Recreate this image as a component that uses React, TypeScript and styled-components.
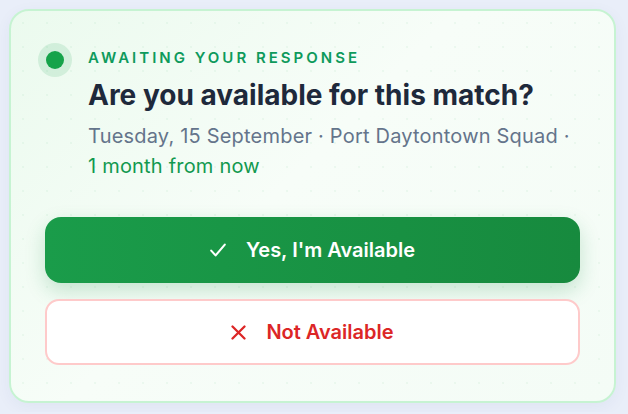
import styled, { createGlobalStyle } from "styled-components";

const GlobalStyle = createGlobalStyle`
  html, body {
    margin: 0;
    padding: 0;
    background: #e9eef9;
  }
  body {
    font-family: Inter, "Noto Sans", sans-serif;
    -webkit-font-smoothing: antialiased;
  }
`;

const Page = styled.div`
  padding: 9px 12px 9px 9px;
`;

const Card = styled.section`
  box-sizing: border-box;
  width: 607px;
  height: 394px;
  border: 2px solid #c6f3d2;
  border-radius: 20px;
  padding: 37px 34px 34px;
  background:
    radial-gradient(circle, rgba(22, 163, 74, 0.05) 1px, transparent 1.5px) 0 0 / 24px 24px,
    linear-gradient(135deg, #ebfaee 0%, #f7fdf8 45%, #f4fcf6 100%);
  box-shadow: 0 4px 16px rgba(30, 60, 120, 0.05);
  display: flex;
  flex-direction: column;
`;

const Header = styled.div`
  display: flex;
  align-items: flex-start;
  gap: 24px;
`;

const Dot = styled.span`
  flex-shrink: 0;
  width: 18px;
  height: 18px;
  margin: 3px 0 0 1px;
  border-radius: 50%;
  background: #16a34a;
  box-shadow: 0 0 0 8px rgba(22, 163, 74, 0.13);
`;

const Texts = styled.div`
  display: flex;
  flex-direction: column;
`;

const Label = styled.div`
  font-size: 15px;
  line-height: 20px;
  font-weight: 600;
  letter-spacing: 3px;
  text-transform: uppercase;
  color: #0e9a5c;
`;

const Title = styled.h1`
  margin: 10px 0 0;
  font-size: 28px;
  line-height: 34px;
  font-weight: 700;
  color: #1e293b;
`;

const Meta = styled.p`
  margin: 9px 0 0;
  font-size: 20px;
  line-height: 30px;
  letter-spacing: 0.2px;
  color: #64748b;
`;

const When = styled.span`
  display: block;
  color: #12994f;
`;

const Actions = styled.div`
  margin-top: 36px;
  display: flex;
  flex-direction: column;
  gap: 16px;
`;

const Button = styled.button<{ $variant: "yes" | "no" }>`
  box-sizing: border-box;
  height: 66px;
  width: 100%;
  display: flex;
  align-items: center;
  justify-content: center;
  gap: 20px;
  font-family: inherit;
  font-size: 20px;
  font-weight: 600;
  cursor: pointer;
  ${({ $variant }) =>
    $variant === "yes"
      ? `
    border: none;
    border-radius: 16px;
    color: #ffffff;
    background: linear-gradient(90deg, #1a9c4a 0%, #178a3e 100%);
    box-shadow: 0 8px 20px rgba(22, 140, 70, 0.22);
  `
      : `
    border: 2px solid #fecaca;
    border-radius: 14px;
    color: #dc2626;
    background: #ffffff;
  `}
`;

const CheckIcon = () => (
  <svg width="16" height="14" viewBox="0 0 16 14" fill="none">
    <path
      d="M1.2 7.6 5.6 12.4 14.8 1.6"
      stroke="#ffffff"
      strokeWidth="2.1"
      strokeLinecap="round"
      strokeLinejoin="round"
    />
  </svg>
);

const CrossIcon = () => (
  <svg width="15" height="15" viewBox="0 0 15 15" fill="none">
    <path
      d="M1.5 1.5 13.5 13.5M13.5 1.5 1.5 13.5"
      stroke="#dc2626"
      strokeWidth="2.3"
      strokeLinecap="round"
    />
  </svg>
);

export default function App() {
  return (
    <>
      <GlobalStyle />
      <Page>
        <Card>
          <Header>
            <Dot />
            <Texts>
              <Label>Awaiting your response</Label>
              <Title>Are you available for this match?</Title>
              <Meta>
                Tuesday, 15 September · Port Daytontown Squad ·
                <When>1 month from now</When>
              </Meta>
            </Texts>
          </Header>
          <Actions>
            <Button $variant="yes">
              <CheckIcon />
              Yes, I'm Available
            </Button>
            <Button $variant="no">
              <CrossIcon />
              Not Available
            </Button>
          </Actions>
        </Card>
      </Page>
    </>
  );
}
